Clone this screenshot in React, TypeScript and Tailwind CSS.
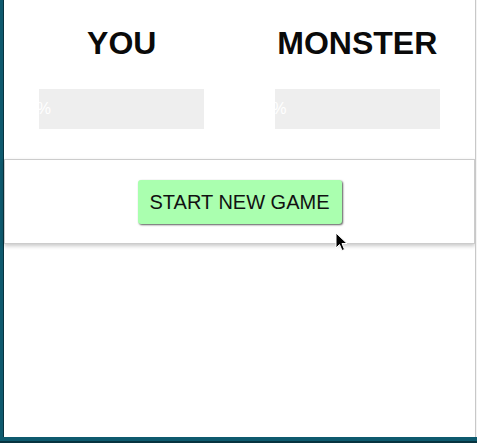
import React from 'react';

function HealthBar() {
  return (
    <div className="mx-auto mt-[27px] h-[40px] w-[70%] bg-[#eeeeee]">
      <div className="flex h-full w-0 items-center justify-center whitespace-nowrap text-[16px] text-white">
        0%
      </div>
    </div>
  );
}

function Cursor() {
  return (
    <svg className="absolute left-[335px] top-[232px]" width="14" height="20" viewBox="0 0 14 20">
      <path d="M1 1 L1 16 L4.5 12.5 L7 18.5 L9.5 17.5 L7 11.5 L12 11.5 Z" fill="#000" stroke="#fff" strokeWidth="1" />
    </svg>
  );
}

export default function App() {
  return (
    <div className="relative flex h-[443px] w-[477px] flex-col bg-[#0e5a6e] font-['Liberation_Sans',Arial,sans-serif] text-[#111]">
      <div className="flex h-[437px]">
        <div className="w-[3px] bg-[#0e5a6e]" />
        <div className="w-[1px] bg-[#07333f]" />
        <div className="flex w-[471px] flex-col bg-white pt-[25px]">
          <div className="grid grid-cols-2">
            <div>
              <h1 className="text-center text-[32px] font-bold leading-[37px] text-[#0a0a0a]">YOU</h1>
              <HealthBar />
            </div>
            <div>
              <h1 className="text-center text-[32px] font-bold leading-[37px] text-[#0a0a0a]">MONSTER</h1>
              <HealthBar />
            </div>
          </div>
          <div className="mt-[30px] flex h-[85px] items-center justify-center border border-[#cccccc] bg-white shadow-[0_2px_4px_rgba(0,0,0,0.22)]">
            <button className="h-[44px] w-[204px] rounded-[3px] bg-[#aaffaf] text-[20px] text-[#111] shadow-[1px_1px_2px_rgba(0,0,0,0.65)]">
              START NEW GAME
            </button>
          </div>
        </div>
        <div className="w-[1px] bg-[#c8c8c8]" />
        <div className="w-[1px] bg-[#f4f4f4]" />
      </div>
      <div className="h-[4px] bg-[#0e5a6e]" />
      <div className="h-[2px] bg-[#07333f]" />
      <Cursor />
    </div>
  );
}
